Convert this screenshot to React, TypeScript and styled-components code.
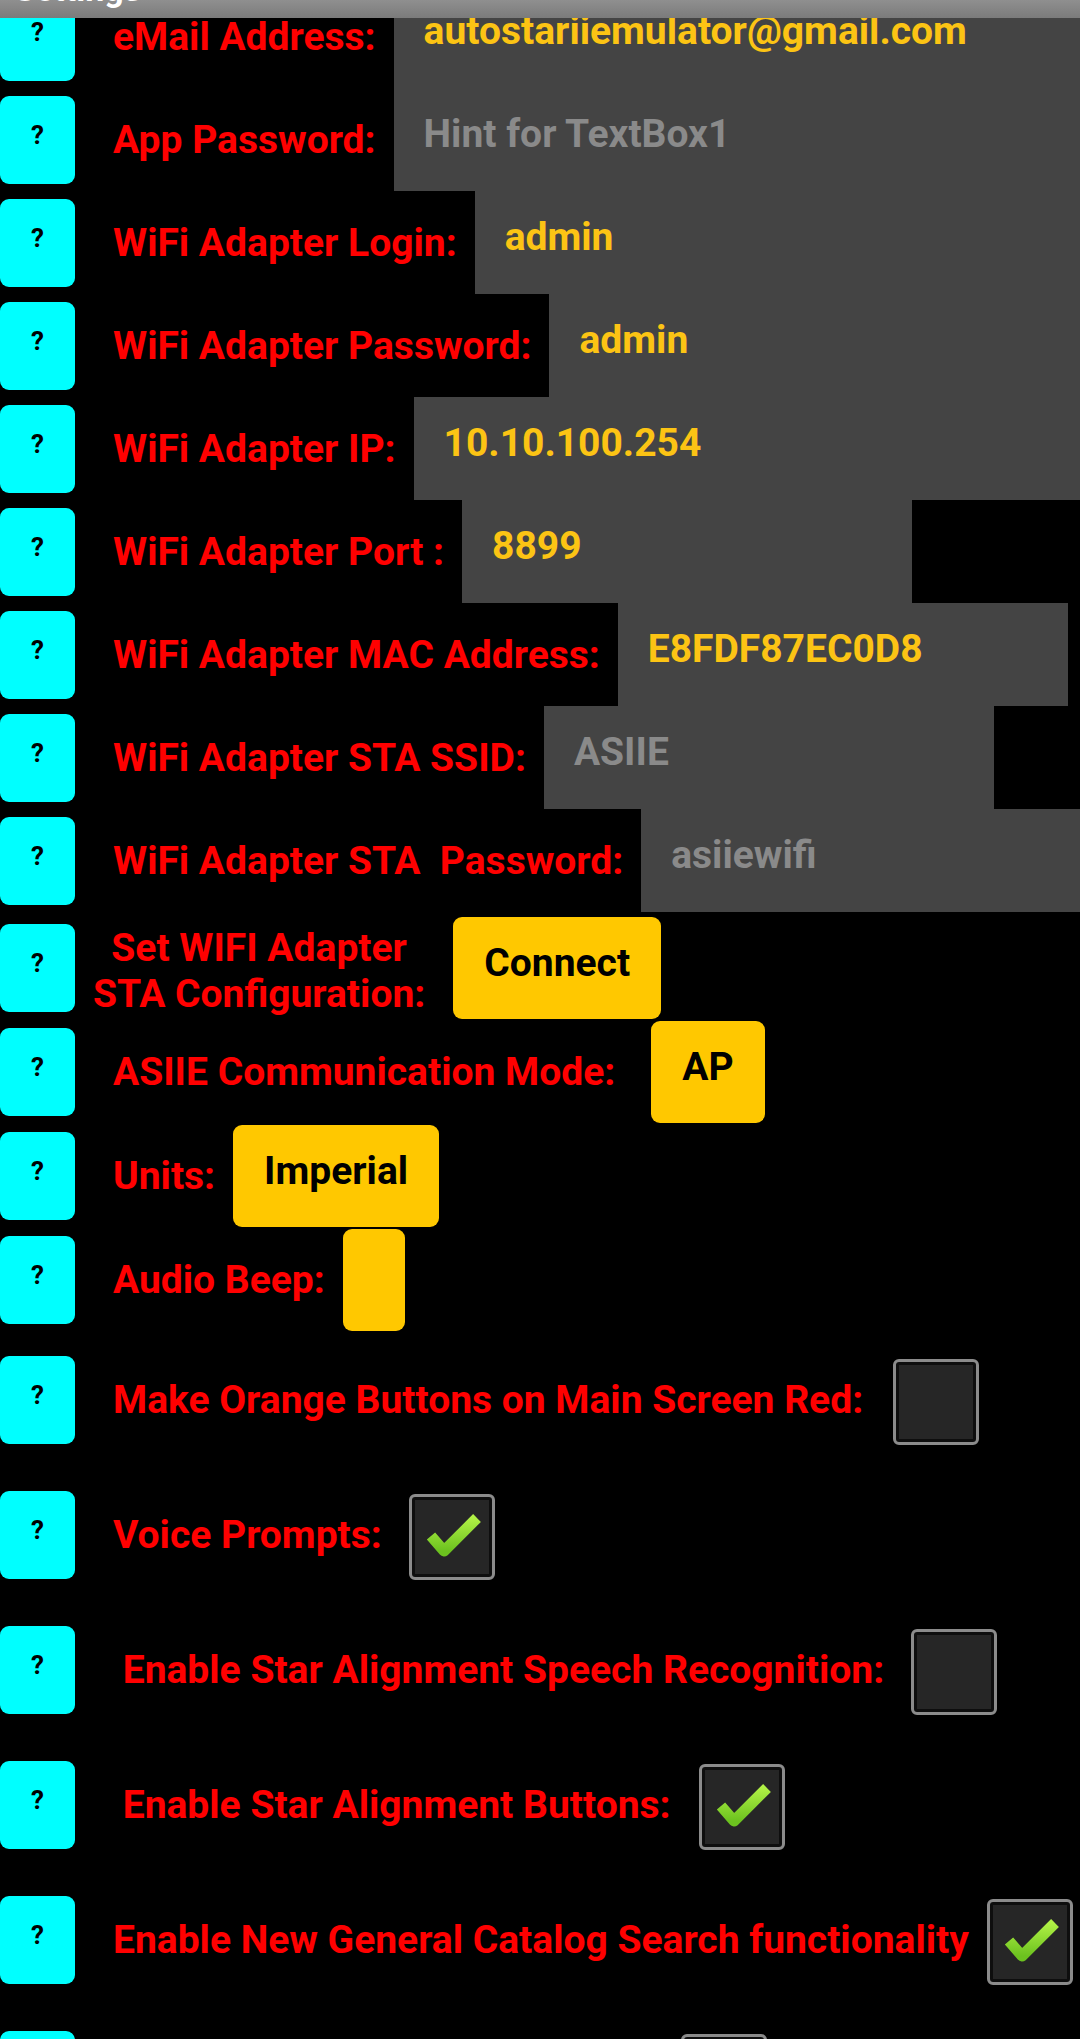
import React from 'react';
import styled, {createGlobalStyle} from 'styled-components';

const GlobalStyle = createGlobalStyle`
  html, body {
    margin: 0;
    padding: 0;
    background: #000;
  }

  body {
    font-family: Roboto, "Noto Sans", "Liberation Sans", sans-serif;
  }
`

const Screen = styled.div`
  width: 1080px;
  height: 2039px;
  overflow: hidden;
  background: #000;
  display: flex;
  flex-direction: column;
`

const TitleBar = styled.div`
  height: 18px;
  flex-shrink: 0;
  overflow: hidden;
  background: linear-gradient(#8f8f8f, #7b7b7b);
`

const TitleText = styled.div`
  margin: -31px 0 0 14px;
  color: #fff;
  font-size: 34px;
  font-weight: 700;
  line-height: 40px;
`

const Viewport = styled.div`
  flex: 1;
  overflow: hidden;
`

// the list is scrolled a little under the title bar
const List = styled.div`
  margin-top: -33px;
  display: flex;
  flex-direction: column;
`

const FieldRow = styled.div`
  display: flex;
  align-items: center;
  height: 103px;
`

const ButtonSection = styled.div`
  padding-top: 4px;
  display: flex;
  flex-direction: column;
`

const ButtonRow = styled.div`
  display: flex;
  align-items: center;
  padding: 1px 0;
`

const CheckRow = styled.div`
  display: flex;
  align-items: center;
  height: 135px;
`

const HelpButton = styled.div`
  flex: 0 0 75px;
  height: 88px;
  box-sizing: border-box;
  padding-top: 24px;
  background: #00ffff;
  border-radius: 9px;
  color: #000;
  font-size: 26px;
  font-weight: 700;
  line-height: 30px;
  text-align: center;
`

const Label = styled.div<{ $indent?: number; $lines?: boolean; $width?: number }>`
  flex-shrink: 0;
  margin-left: ${p => p.$indent ?? 38}px;
  margin-right: 18px;
  ${p => p.$width ? `width: ${p.$width}px;` : ''}
  color: #ff0000;
  font-size: 39px;
  font-weight: 700;
  line-height: ${p => p.$lines ? '46px' : 'normal'};
  padding-top: ${p => p.$lines ? '6px' : '0'};
  text-align: center;
  white-space: pre;
`

const TextBox = styled.div<{ $width?: number; $hint?: boolean }>`
  align-self: stretch;
  ${p => p.$width ? `flex: 0 0 ${p.$width}px;` : 'flex: 1;'}
  box-sizing: border-box;
  padding: 23px 0 0 30px;
  background: #444;
  color: ${p => p.$hint ? '#8a8a8a' : '#fcc414'};
  font-size: 39px;
  font-weight: 700;
  line-height: 46px;
  white-space: nowrap;
  overflow: hidden;
`

const ActionButton = styled.div<{ $gap?: number }>`
  flex-shrink: 0;
  margin-left: ${p => p.$gap ?? 0}px;
  height: 102px;
  min-width: 60px;
  box-sizing: border-box;
  padding: 23px 31px 0;
  background: #ffc800;
  border-radius: 9px;
  color: #000;
  font-size: 39px;
  font-weight: 700;
  line-height: 46px;
  text-align: center;
`

const CheckBox = styled.div<{ $gap?: number }>`
  flex: 0 0 86px;
  height: 86px;
  margin: 5px 0 0 ${p => p.$gap ?? 12}px;
  box-sizing: border-box;
  border: 3px solid #8b8b8b;
  border-radius: 6px;
  background: #262626;
  box-shadow: inset 0 0 0 3px #0e0e0e;
`

const Tick = () => (
    <svg width="80" height="80" viewBox="0 0 80 80">
        <defs>
            <linearGradient id="tick" x1="0" y1="0" x2="0" y2="1">
                <stop offset="0" stopColor="#b0f045"/>
                <stop offset="1" stopColor="#6cc21f"/>
            </linearGradient>
        </defs>
        <polyline points="19,39 32,54 65,21" fill="none" stroke="url(#tick)"
                  strokeWidth="11" strokeLinejoin="round"/>
    </svg>
)

const fields = [
    {label: 'eMail Address:', value: 'autostariiemulator@gmail.com'},
    {label: 'App Password:', value: 'Hint for TextBox1', hint: true},
    {label: 'WiFi Adapter Login:', value: 'admin'},
    {label: 'WiFi Adapter Password:', value: 'admin'},
    {label: 'WiFi Adapter IP:', value: '10.10.100.254'},
    {label: 'WiFi Adapter Port :', value: '8899', width: 450},
    {label: 'WiFi Adapter MAC Address:', value: 'E8FDF87EC0D8', width: 450},
    {label: 'WiFi Adapter STA SSID:', value: 'ASIIE', hint: true, width: 450},
    {label: 'WiFi Adapter STA  Password:', value: 'asiiewifi', hint: true},
]

const checks = [
    {label: 'Make Orange Buttons on Main Screen Red:', on: false},
    {label: 'Voice Prompts:', on: true, gap: 9},
    {label: ' Enable Star Alignment Speech Recognition:', on: false, gap: 9},
    {label: ' Enable Star Alignment Buttons:', on: true, gap: 10},
    {label: 'Enable New General Catalog Search functionality', on: true, gap: 0},
]

export default function App() {
    return (
        <Screen>
            <GlobalStyle/>
            <TitleBar>
                <TitleText>Settings</TitleText>
            </TitleBar>

            <Viewport>
                <List>
                    {fields.map(f => (
                        <FieldRow key={f.label}>
                            <HelpButton>?</HelpButton>
                            <Label>{f.label}</Label>
                            <TextBox $width={f.width} $hint={f.hint}>{f.value}</TextBox>
                        </FieldRow>
                    ))}

                    <ButtonSection>
                        <ButtonRow>
                            <HelpButton>?</HelpButton>
                            <Label $indent={18} $lines>{'Set WIFI Adapter\nSTA Configuration:'}</Label>
                            <ActionButton $gap={10}>Connect</ActionButton>
                        </ButtonRow>
                        <ButtonRow>
                            <HelpButton>?</HelpButton>
                            <Label>ASIIE Communication Mode:</Label>
                            <ActionButton $gap={18}>AP</ActionButton>
                        </ButtonRow>
                        <ButtonRow>
                            <HelpButton>?</HelpButton>
                            <Label>Units:</Label>
                            <ActionButton>Imperial</ActionButton>
                        </ButtonRow>
                        <ButtonRow>
                            <HelpButton>?</HelpButton>
                            <Label>Audio Beep:</Label>
                            <ActionButton/>
                        </ButtonRow>
                    </ButtonSection>

                    {checks.map(c => (
                        <CheckRow key={c.label}>
                            <HelpButton>?</HelpButton>
                            <Label>{c.label}</Label>
                            <CheckBox $gap={c.gap}>{c.on && <Tick/>}</CheckBox>
                        </CheckRow>
                    ))}
                    <CheckRow>
                        <HelpButton>?</HelpButton>
                        <Label $width={538}/>
                        <CheckBox/>
                    </CheckRow>
                </List>
            </Viewport>
        </Screen>
    );
}
